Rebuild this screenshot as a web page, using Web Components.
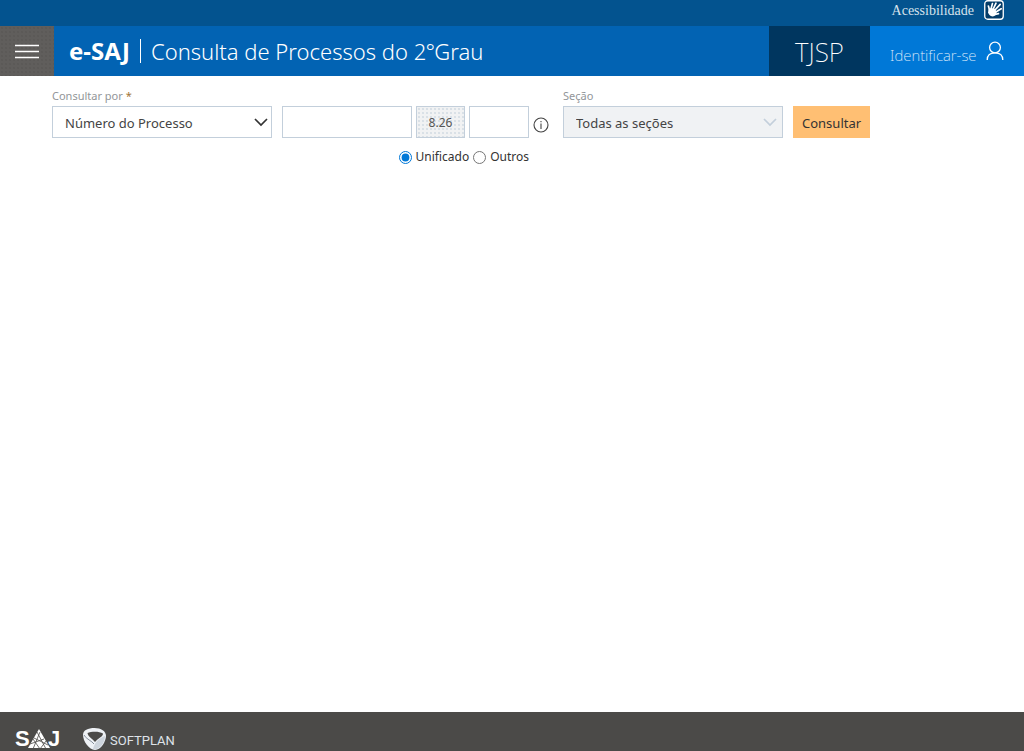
<!DOCTYPE html>
<html lang="pt-BR">
<head>
<meta charset="utf-8">
<meta name="viewport" content="width=device-width, initial-scale=1">
<title>e-SAJ | Consulta de Processos do 2ºGrau</title>
<style>
  html, body { margin: 0; }
  body { font-family: "Noto Sans", "Open Sans", sans-serif; font-size: 13px; color: #444; background: #fff; }
</style>
</head>
<body>
<saj-page>
  <saj-accessibility slot="top">Acessibilidade</saj-accessibility>
  <saj-header slot="top" brand="e-SAJ" court="TJSP">Consulta de Processos do 2ºGrau</saj-header>
  <saj-search></saj-search>
  <saj-footer slot="bottom"></saj-footer>
</saj-page>

<script>
class SajElement extends HTMLElement {
  constructor() {
    super();
    const root = this.attachShadow({ mode: "open" });
    root.innerHTML = "<style>*{box-sizing:border-box}</style>" + this.view();
  }
}

customElements.define("saj-page", class extends SajElement {
  view() {
    return `<style>
      :host { display: flex; flex-direction: column; min-height: 100vh; }
      main { flex: 1; }
    </style>
    <slot name="top"></slot><main><slot></slot></main><slot name="bottom"></slot>`;
  }
});

customElements.define("saj-accessibility", class extends SajElement {
  view() {
    return `<style>
      :host { display: flex; justify-content: flex-end; height: 26px; padding: 0 20px; background: #03538f; }
      a { display: flex; gap: 10px; height: 20px; color: #d6e2ec; text-decoration: none;
          font: 14px/22px "Liberation Serif", serif; }
      svg { display: block; }
    </style>
    <a href="#"><slot></slot>
      <svg width="20" height="20" viewBox="0 0 20 20" aria-hidden="true">
        <rect x=".75" y=".75" width="18.5" height="18.5" rx="3" fill="#043c68" stroke="#fff" stroke-width="1.3"/>
        <g fill="none" stroke="#fff" stroke-linecap="round" stroke-width="1.7">
          <path d="M5.5 10 4.4 6M7 9 8.4 3.6M9 9.5 12 3.2M10.5 10.5 16.2 4.4M11 12.5 17.2 8.8M11 14.3 14.5 13.6"/>
        </g>
        <path fill="#fff" d="M4.5 9.5 7 8 10.5 8.8 12.6 11.5 11.8 14.8C10 17.2 7 16.8 5.5 15L4 12.8Z"/>
      </svg>
    </a>`;
  }
});

customElements.define("saj-header", class extends SajElement {
  view() {
    return `<style>
      :host { display: flex; height: 50px; background: #0263b3; color: #fff; }
      button { display: grid; place-items: center; flex: none; width: 54px; border: 0; padding: 2px 0 0; color: #fff;
        background: #605e5c radial-gradient(circle, #575553 20%, transparent 30%) 0 0 / 4px 4px; }
      h1 { flex: 1; display: flex; align-items: center; gap: 10px; margin: 0; padding: 0 15px; font-weight: 300; font-size: 22px; line-height: 48px; white-space: nowrap; }
      b { font-size: 24px; font-weight: 700; }
      i { width: 1px; height: 24px; background: #fff; }
      .court { display: grid; place-items: center; flex: none; width: 101px; background: #00365f; font-size: 26px; font-weight: 200; line-height: 46px; padding-top: 2px; }
      a { display: flex; align-items: center; justify-content: space-between; flex: none; width: 154px; padding: 0 20px; background: #0078d7; color: #e2f0fc; font-weight: 200; font-size: 15px; text-decoration: none; white-space: nowrap; }
      a span { padding-top: 8px; }
      a svg { flex: none; }
    </style>
    <button type="button" aria-label="Menu"><svg width="24" height="16" viewBox="0 0 24 16"><path d="M0 1.5H24M0 7.5H24M0 13.5H24" stroke="#fff" stroke-width="1.4"/></svg></button>
    <h1><b></b><i></i><span><slot></slot></span></h1>
    <div class="court"></div>
    <a href="#"><span>Identificar-se</span><svg width="18" height="20" viewBox="0 0 18 20" fill="none" stroke="#fff" stroke-width="1.3" aria-hidden="true"><circle cx="9" cy="6.5" r="5.4"/><path d="M1.2 19C1.2 14.5 4.3 11.9 9 11.9S16.8 14.5 16.8 19"/></svg></a>`;
  }
  connectedCallback() {
    this.shadowRoot.querySelector("b").textContent = this.getAttribute("brand");
    this.shadowRoot.querySelector(".court").textContent = this.getAttribute("court");
  }
});

customElements.define("saj-select", class extends SajElement {
  view() {
    return `<style>
      :host { display: block; min-width: 0; }
      label { display: block; height: 20px; font-size: 11px; line-height: 20px; color: #929699; }
      label span { color: #a07438; }
      .box { position: relative; }
      select { display: block; appearance: none; width: 100%; height: 32px; margin: 0; padding: 2px 28px 0 12px; border: 1px solid #c3cfdb; border-radius: 0;
        background: #fff; color: #444; font: inherit; opacity: 1; }
      select:disabled { background: #f0f2f4; }
      svg { position: absolute; right: 4px; top: 12px; pointer-events: none; stroke: #333; }
      select:disabled + svg { right: 6px; stroke: #c3cfdb; }
    </style>
    <label for="field"></label>
    <div class="box"><select id="field"><option></option></select>
    <svg width="14" height="9" viewBox="0 0 14 9" fill="none" stroke-width="1.7" aria-hidden="true"><path d="M1 1 7 7 13 1"/></svg></div>`;
  }
  connectedCallback() {
    const r = this.shadowRoot, label = r.querySelector("label");
    label.textContent = this.getAttribute("label");
    if (this.hasAttribute("required")) {
      const star = document.createElement("span");
      star.textContent = " *";
      label.append(star);
    }
    r.querySelector("option").textContent = this.getAttribute("value");
    r.querySelector("select").disabled = this.hasAttribute("disabled");
  }
});

customElements.define("saj-process-number", class extends SajElement {
  view() {
    return `<style>
      :host { display: flex; gap: 4px; padding-top: 20px; }
      .fields { flex: 1; min-width: 0; }
      .row { display: flex; gap: 4px; }
      input[type=text] { min-width: 0; height: 32px; border: 1px solid #c3cfdb; border-radius: 0; padding: 0 4px; font: inherit; color: #555; background: #fff; }
      .number { flex: 1; }
      .origin { width: 60px; }
      input[type=text].code { width: 49px; text-align: center; font-size: 12px;
        background: #f1f2f3 radial-gradient(circle, #c3cfdb 20%, transparent 30%) 0 0 / 4px 4px; }
      .kinds { display: flex; justify-content: flex-end; gap: 4px; margin-top: 9px; line-height: 20px; font-size: 12px; color: #333; }
      label { display: flex; align-items: center; gap: 4px; }
      input[type=radio] { width: 13px; height: 13px; margin: 0; accent-color: #0078d7; }
      button { align-self: flex-start; margin-top: 11px; border: 0; padding: 0; background: none; }
      svg { display: block; }
    </style>
    <div class="fields">
      <div class="row">
        <input type="text" class="number" aria-label="Número e ano">
        <input type="text" class="code" value="8.26" readonly aria-label="Justiça e tribunal">
        <input type="text" class="origin" aria-label="Foro">
      </div>
      <div class="kinds">
        <label><input type="radio" name="kind" checked>Unificado</label>
        <label><input type="radio" name="kind">Outros</label>
      </div>
    </div>
    <button type="button" aria-label="Ajuda"><svg width="16" height="16" viewBox="0 0 16 16" fill="none" stroke="#444" stroke-width="1.1"><circle cx="8" cy="8" r="7"/><path d="M8 6.5V12M8 4V5.3"/></svg></button>`;
  }
});

customElements.define("saj-search", class extends SajElement {
  view() {
    return `<style>
      :host { display: block; padding: 10px 52px; }
      form { display: grid; grid-template-columns: minmax(0, 220px) minmax(200px, 267px) minmax(0, 220px) auto; column-gap: 10px; justify-content: start; align-items: start; }
      .section { margin-left: 4px; margin-right: -4px; }
      .submit { margin: 20px 0 0 4px; height: 32px; padding: 2px 9px 0; border: 0; background: #ffbf73; color: #333; font: inherit; }
    </style>
    <form>
      <saj-select label="Consultar por" required value="Número do Processo"></saj-select>
      <saj-process-number></saj-process-number>
      <saj-select class="section" label="Seção" disabled value="Todas as seções"></saj-select>
      <button type="button" class="submit">Consultar</button>
    </form>`;
  }
});

customElements.define("saj-footer", class extends SajElement {
  view() {
    return `<style>
      :host { display: flex; align-items: flex-start; gap: 22px; padding: 15px 15px 0; background: #4b4a48; color: #fff; }
      a { display: block; }
      svg { display: block; }
    </style>
    <a href="#" aria-label="SAJ"><svg width="46" height="24" viewBox="0 0 46 24">
      <g fill="#fff" font-size="22" font-weight="700" font-family="Liberation Sans, sans-serif"><text x="0" y="19">S</text><text x="33" y="19">J</text></g>
      <path fill="#fff" d="M24 2 35 21H13Z"/>
      <path fill="none" stroke="#4b4a48" stroke-width=".8" d="M22 5 31 22M18 12 25 22M25 5 18 22M31 14 25 22M19 11 33 18M15 17 29 12"/>
    </svg></a>
    <a href="#" aria-label="Softplan"><svg width="92" height="24" viewBox="0 0 92 24">
      <path fill="#eef1f5" d="M0 8C0 3 5 1 11.500 1S23 4 23 9 18 23 12 23 0 14 0 8Z"/>
      <path fill="#4b4a48" d="M4.500 6C8 4.500 16 4 20 6.500 20 10 15 11 12 15 9 11 5 10 4.500 6Z"/>
      <path fill="#cdd4dc" d="M22 9C17 11 12 14 10 22 16 24 22 16 22 9Z"/>
      <path fill="none" stroke="#87919d" d="M1 8C3 12 9 14 11 17"/>
      <text x="27" y="18" fill="#dfe3e8" font-size="13" font-family="Roboto, sans-serif">SOFTPLAN</text>
    </svg></a>`;
  }
});
</script>
</body>
</html>
